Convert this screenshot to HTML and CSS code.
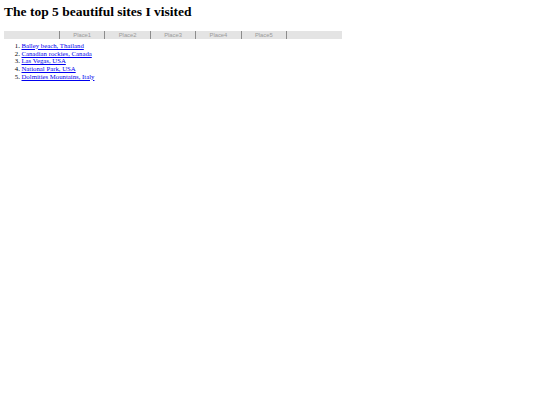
FILE: index.html
```html
<!DOCTYPE html>
<html>
<head>
<meta charset="utf-8">
<title>The top 5 beautiful sites I visited</title>
<link rel="stylesheet" href="styles.css">
</head>
<body class="page">
<h1 class="title">The top 5 beautiful sites I visited</h1>
<nav class="menu">
  <a class="menu-item" href="#p1">Place1</a><a class="menu-item" href="#p2">Place2</a><a class="menu-item" href="#p3">Place3</a><a class="menu-item" href="#p4">Place4</a><a class="menu-item" href="#p5">Place5</a>
</nav>
<ol class="places">
  <li><a class="place-link" href="#p1">Balley beach, Thailand</a></li>
  <li><a class="place-link" href="#p2">Canadian rockies, Canada</a></li>
  <li><a class="place-link" href="#p3">Las Vegas, USA</a></li>
  <li><a class="place-link" href="#p4">National Park, USA</a></li>
  <li><a class="place-link" href="#p5">Dolmities Mountains, Italy</a></li>
</ol>
</body>
</html>
```

FILE: styles.css
```css
html {
  background: #ffffff;
}
.page {
  margin: 0;
  padding: 3.5px 4px;
  font-family: "Liberation Serif", "Times New Roman", serif;
  font-size: 6.75px;
  line-height: 7.75px;
  color: #000;
}
.title {
  font-size: 13.5px;
  line-height: 15.5px;
  font-weight: bold;
  margin: 0 0 12px;
}
.menu {
  width: 338px;
  height: 8.4px;
  background: #e4e4e4;
  display: flex;
  justify-content: center;
}
.menu-item {
  width: 44.4px;
  border-left: 1px solid #8c8c8c;
  text-align: center;
  font-family: "Liberation Sans", Arial, sans-serif;
  font-size: 5.8px;
  line-height: 8.4px;
  color: #9a9a9a;
  text-decoration: none;
}
.menu-item:last-child {
  border-right: 1px solid #8c8c8c;
}
.places {
  margin: 2.5px 0 0;
  padding-left: 17.5px;
}
.place-link {
  color: #0000ee;
}
```
